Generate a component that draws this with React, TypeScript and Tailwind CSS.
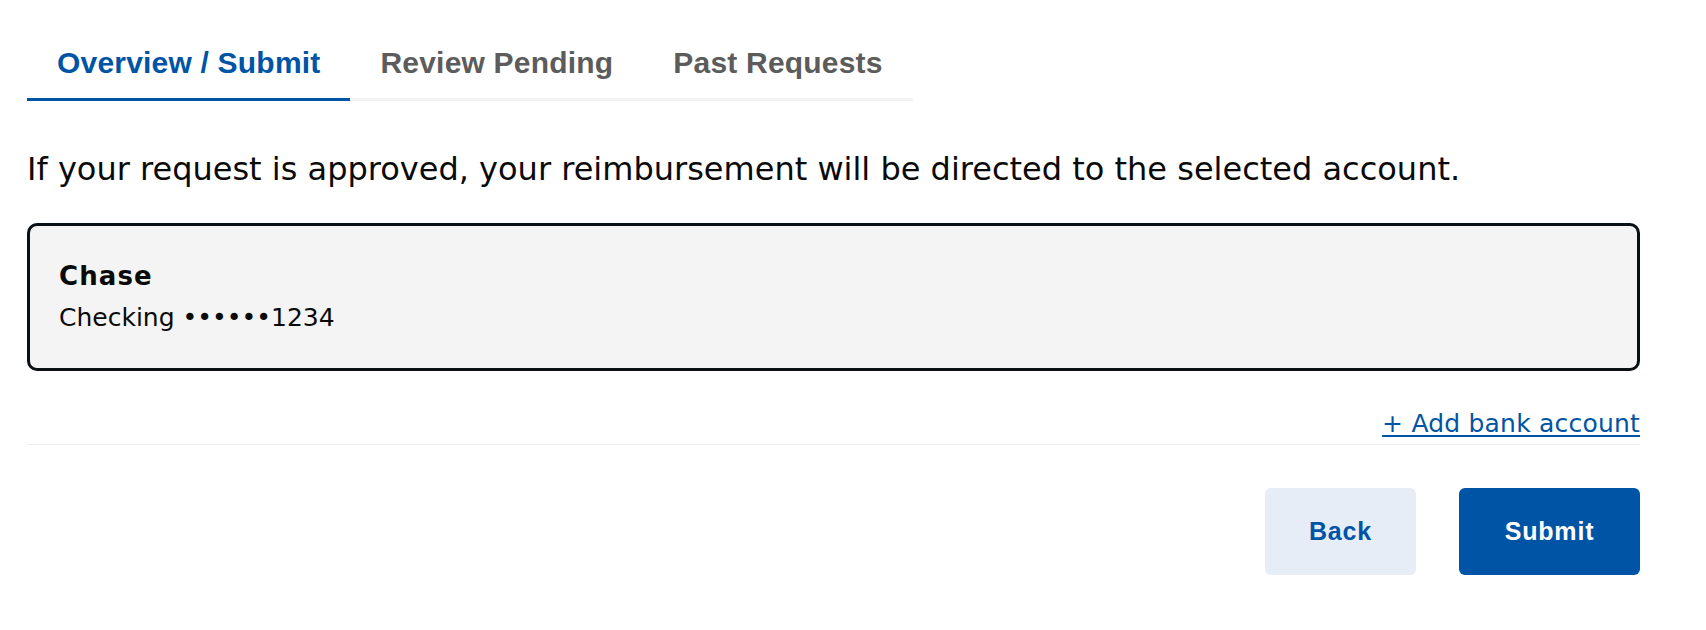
import { useState } from 'react';

const tabs = ['Overview / Submit', 'Review Pending', 'Past Requests'];

export default function App() {
  const [activeTab, setActiveTab] = useState(0);

  return (
    <div className="min-h-screen bg-white pl-[27px] pr-[66px] pt-[27px] font-['DejaVu_Sans',sans-serif] text-[#0a0a0a]">
      <div className="flex w-fit border-b-[3px] border-[#f2f2f2]">
        {tabs.map((tab, i) => (
          <button
            key={tab}
            onClick={() => setActiveTab(i)}
            className={`-mb-[3px] border-b-[3px] px-[30px] pt-[18px] pb-[17px] font-['Liberation_Sans',Arial,sans-serif] text-[30px] font-bold leading-[36px] tracking-[0.2px] ${
              i === activeTab ? 'border-[#0054a5] text-[#0054a5]' : 'border-transparent text-[#5c5c5c]'
            }`}
          >
            {tab}
          </button>
        ))}
      </div>

      <p className="mt-[48px] text-[32px] leading-[40px]">
        If your request is approved, your reimbursement will be directed to the selected account.
      </p>

      <div className="mt-[34px] rounded-[10px] border-[3px] border-[#0a1114] bg-[#f4f4f4] px-[29px] pt-[35px] pb-[35px]">
        <div className="text-[26px] font-bold leading-[30px] tracking-[1.1px]">Chase</div>
        <div className="mt-[12px] text-[25px] leading-[30px]">Checking ••••••1234</div>
      </div>

      <div className="mt-[38px] flex justify-end border-b border-[#efefef] pb-[5px]">
        <a
          href="#"
          className="text-[25px] leading-[30px] tracking-[0.2px] text-[#0054a5] underline decoration-2 underline-offset-[3px]"
        >
          + Add bank account
        </a>
      </div>

      <div className="mt-[43px] flex justify-end gap-[43px] font-['Liberation_Sans',Arial,sans-serif] text-[25px] font-bold tracking-[0.8px]">
        <button className="h-[87px] w-[151px] rounded-[6px] bg-[#e7edf6] text-[#0054a5]">Back</button>
        <button className="h-[87px] w-[181px] rounded-[6px] bg-[#0054a5] text-white">Submit</button>
      </div>
    </div>
  );
}
